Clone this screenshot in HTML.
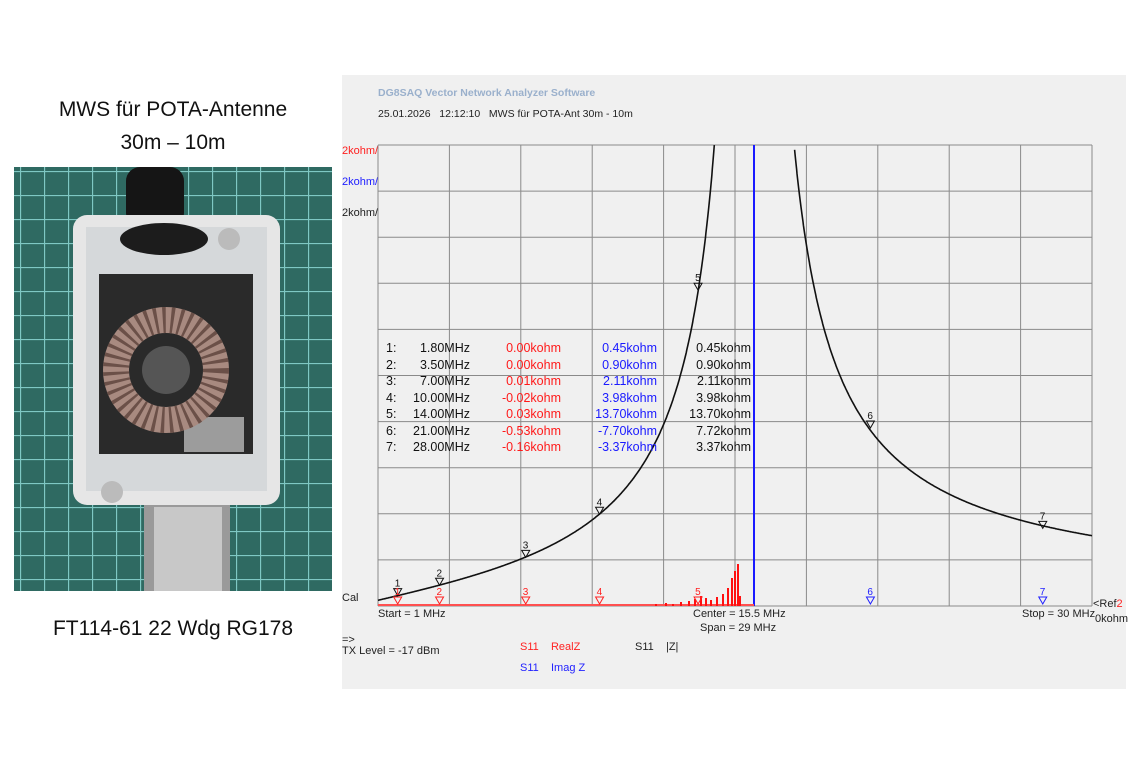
<!DOCTYPE html>
<html><head><meta charset="utf-8">
<style>
*{margin:0;padding:0;box-sizing:border-box}
body{width:1140px;height:760px;background:#fff;position:relative;overflow:hidden;font-family:"Liberation Sans","DejaVu Sans",sans-serif}
.t{position:absolute;white-space:nowrap}
.ttl{font-size:21px;color:#111;text-align:center;width:330px;left:8px}
.panel{position:absolute;left:342px;top:75px;width:784px;height:614px;background:#f0f0f0}
.s{font-size:11px;color:#222;position:absolute;white-space:nowrap}
.row{position:absolute;left:386px;font-size:12.5px;height:16px;width:380px}
.row span{position:absolute;top:0}
.r{color:#ff1a1a}.b{color:#1a1aff}.k{color:#111}
</style></head><body>
<div class="t ttl" style="top:98px">MWS für POTA-Antenne</div>
<div class="t ttl" style="top:131px">30m – 10m</div>
<div class="t ttl" style="top:617px">FT114-61 22 Wdg RG178</div>

<svg style="position:absolute;left:14px;top:167px" width="318" height="424" viewBox="0 0 318 424">
<defs><pattern id="g" width="24" height="24" patternUnits="userSpaceOnUse" x="6" y="4"><rect width="24" height="24" fill="#2f6a62"/><path d="M0 0.5H24M0.5 0V24" stroke="#7fc8c4" stroke-width="1.3"/></pattern></defs>
<rect width="318" height="424" fill="url(#g)"/>
<rect x="112" y="0" width="58" height="60" rx="14" fill="#151515"/>
<rect x="130" y="330" width="86" height="94" fill="#9a9a9a"/>
<rect x="140" y="340" width="68" height="84" fill="#c8c8c8"/>
<rect x="59" y="48" width="207" height="290" rx="14" fill="#e6e6e6"/>
<rect x="72" y="60" width="181" height="264" fill="#d5d8da"/>
<ellipse cx="150" cy="72" rx="44" ry="16" fill="#1c1c1c"/>
<rect x="85" y="107" width="154" height="180" fill="#2a2a2a"/>
<rect x="170" y="250" width="60" height="35" fill="#9c9c9c"/>
<circle cx="152" cy="203" r="50" fill="none" stroke="#a88a80" stroke-width="26"/>
<circle cx="152" cy="203" r="50" fill="none" stroke="#6b5048" stroke-width="26" stroke-dasharray="3 5"/>
<circle cx="152" cy="203" r="24" fill="#555"/>
<circle cx="215" cy="72" r="11" fill="#bbb"/>
<circle cx="98" cy="325" r="11" fill="#bbb"/>
</svg>

<div class="panel"></div>
<div class="s" style="left:378px;top:87px;color:#9ab0cc;font-weight:bold;font-size:10.5px">DG8SAQ Vector Network Analyzer Software</div>
<div class="s" style="left:378px;top:108px;font-size:10.5px">25.01.2026&nbsp;&nbsp;&nbsp;12:12:10&nbsp;&nbsp;&nbsp;MWS für POTA-Ant 30m - 10m</div>
<div class="s" style="left:342px;top:145px;color:#ff2020">2kohm/</div>
<div class="s" style="left:342px;top:176px;color:#2020ff">2kohm/</div>
<div class="s" style="left:342px;top:207px">2kohm/</div>
<div class="s" style="left:342px;top:592px">Cal</div>
<div class="s" style="left:378px;top:608px">Start = 1 MHz</div>
<div class="s" style="left:693px;top:608px">Center = 15.5 MHz</div>
<div class="s" style="left:700px;top:622px">Span = 29 MHz</div>
<div class="s" style="left:1022px;top:608px">Stop = 30 MHz</div>
<div class="s" style="left:1093px;top:598px">&lt;Ref<span style="color:#f22">2</span></div>
<div class="s" style="left:1095px;top:613px">0kohm</div>
<div class="s" style="left:342px;top:634px">=&gt;</div>
<div class="s" style="left:342px;top:645px">TX Level = -17 dBm</div>
<div class="s" style="left:520px;top:641px;color:#f22">S11&nbsp;&nbsp;&nbsp;&nbsp;RealZ</div>
<div class="s" style="left:635px;top:641px">S11&nbsp;&nbsp;&nbsp;&nbsp;|Z|</div>
<div class="s" style="left:520px;top:662px;color:#22f">S11&nbsp;&nbsp;&nbsp;&nbsp;Imag Z</div>

<svg id="ch" style="position:absolute;left:0;top:0" width="1140" height="760"></svg>

<div id="tbl"></div>
<script>
var s='',x0=378,x1=1092,y0=145,y1=606;
for(var i=0;i<=10;i++){var x=x0+(x1-x0)*i/10,y=y0+(y1-y0)*i/10;
s+='<line x1="'+x+'" y1="'+y0+'" x2="'+x+'" y2="'+y1+'" stroke="#8a8a8a" stroke-width="1"/>';
s+='<line x1="'+x0+'" y1="'+y+'" x2="'+x1+'" y2="'+y+'" stroke="#8a8a8a" stroke-width="1"/>';}
function X(f){return x0+(f-1)/29*714}
function Y(z){return y1-z*23.05}
function Z(f){return Math.abs(0.247*f/(1-(f/16.2)*(f/16.2)))}
var p='',p2='';
for(var f=1;f<16.2;f+=0.02){var y=Y(Z(f));if(y<y0)break;p+=(p?'L':'M')+X(f).toFixed(1)+' '+y.toFixed(1);}
for(var f=30;f>16.2;f-=0.02){var y=Y(Z(f));if(y<y0)break;p2+=(p2?'L':'M')+X(f).toFixed(1)+' '+y.toFixed(1);}
s+='<line x1="754" y1="145" x2="754" y2="606" stroke="#1a1aff" stroke-width="2"/>';
s+='<line x1="378" y1="605" x2="754" y2="605" stroke="#ff5050" stroke-width="2"/>';
var bars=[[655,2],[665,3],[672,2],[680,4],[688,5],[694,7],[700,10],[705,8],[710,6],[716,9],[722,12],[727,18],[731,28],[734,35],[737,42],[739,10]];
bars.forEach(function(b){s+='<rect x="'+b[0]+'" y="'+(606-b[1])+'" width="2" height="'+b[1]+'" fill="#ff1010"/>'});
s+='<path d="'+p+'" fill="none" stroke="#111" stroke-width="1.6"/><path d="'+p2+'" fill="none" stroke="#111" stroke-width="1.6"/>';
var fr=[1.8,3.5,7,10,14,21,28],zz=[0.45,0.9,2.11,3.98,13.7,7.72,3.37];
for(var i=0;i<7;i++){var x=X(fr[i]),y=Y(zz[i]);
s+='<path d="M'+(x-4)+' '+(y-7)+'h8l-4 7z" fill="none" stroke="#111"/><text x="'+(x-3)+'" y="'+(y-9)+'" font-size="10" fill="#111" font-family="Liberation Sans">'+(i+1)+'</text>';
var c=i<5?'#ff2020':'#2020ff',yy=604;
s+='<path d="M'+(x-4)+' '+(yy-7)+'h8l-4 7z" fill="none" stroke="'+c+'"/><text x="'+(x-3)+'" y="'+(yy-9)+'" font-size="10" fill="'+c+'" font-family="Liberation Sans">'+(i+1)+'</text>';}
document.getElementById('ch').innerHTML=s;
var rows=[["1.80","0.00","0.45","0.45"],["3.50","0.00","0.90","0.90"],["7.00","0.01","2.11","2.11"],["10.00","-0.02","3.98","3.98"],["14.00","0.03","13.70","13.70"],["21.00","-0.53","-7.70","7.72"],["28.00","-0.16","-3.37","3.37"]];
var h='';
rows.forEach(function(r,i){var top=341+i*16.5;
h+='<div class="row" style="top:'+top+'px"><span class="k" style="left:0">'+(i+1)+':</span>'+
'<span class="k" style="right:'+(766-470)+'px">'+r[0]+'MHz</span>'+
'<span class="r" style="right:'+(766-561)+'px">'+r[1]+'kohm</span>'+
'<span class="b" style="right:'+(766-657)+'px">'+r[2]+'kohm</span>'+
'<span class="k" style="right:'+(766-751)+'px">'+r[3]+'kohm</span></div>';});
document.getElementById('tbl').innerHTML=h;
</script>
</body></html>
